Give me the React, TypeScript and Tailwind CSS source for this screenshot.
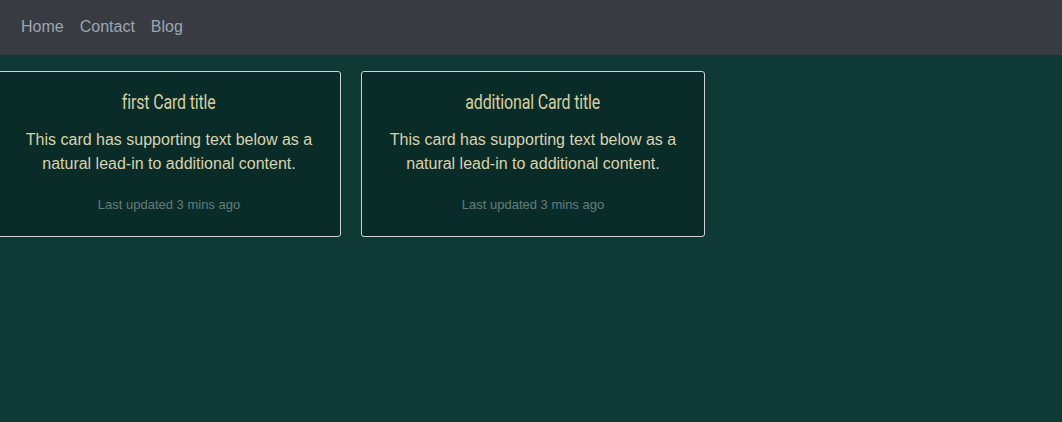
const cards = [
  { title: 'first Card title', first: true },
  { title: 'additional Card title', first: false },
];

function Card({ title, first }: { title: string; first: boolean }) {
  return (
    <div
      className={`w-[344px] shrink-0 border border-[#cfd4d2] rounded-[3px] bg-[#0a2c29] text-center pt-[17px] pb-[21px] px-4 ${
        first ? 'ml-[-3px]' : ''
      }`}
    >
      <h5 className="font-['Roboto',sans-serif] text-[21px] leading-[26px] text-[#d8cfa0] font-normal">
        <span className="inline-block scale-x-[0.76] origin-center tracking-[-0.2px]">{title}</span>
      </h5>
      <p className="mt-[13px] text-[16px] leading-[24px] text-[#d9d2ae]">
        This card has supporting text below as a
        <br />
        natural lead-in to additional content.
      </p>
      <p className="mt-[19px] text-[13px] leading-[20px] text-[#647c79]">Last updated 3 mins ago</p>
    </div>
  );
}

export default function App() {
  return (
    <div className="min-h-[422px] w-full bg-[#0e3934] font-['Liberation_Sans',Arial,sans-serif] overflow-hidden">
      <nav className="h-[55px] bg-[#383b42] flex items-center pl-[21px] pb-[2px] gap-4 text-[16px] text-[#9ca6b1]">
        <a>Home</a>
        <a>Contact</a>
        <a>Blog</a>
      </nav>
      <div className="flex gap-[20px] pt-4">
        {cards.map((c) => (
          <Card key={c.title} title={c.title} first={c.first} />
        ))}
      </div>
    </div>
  );
}
